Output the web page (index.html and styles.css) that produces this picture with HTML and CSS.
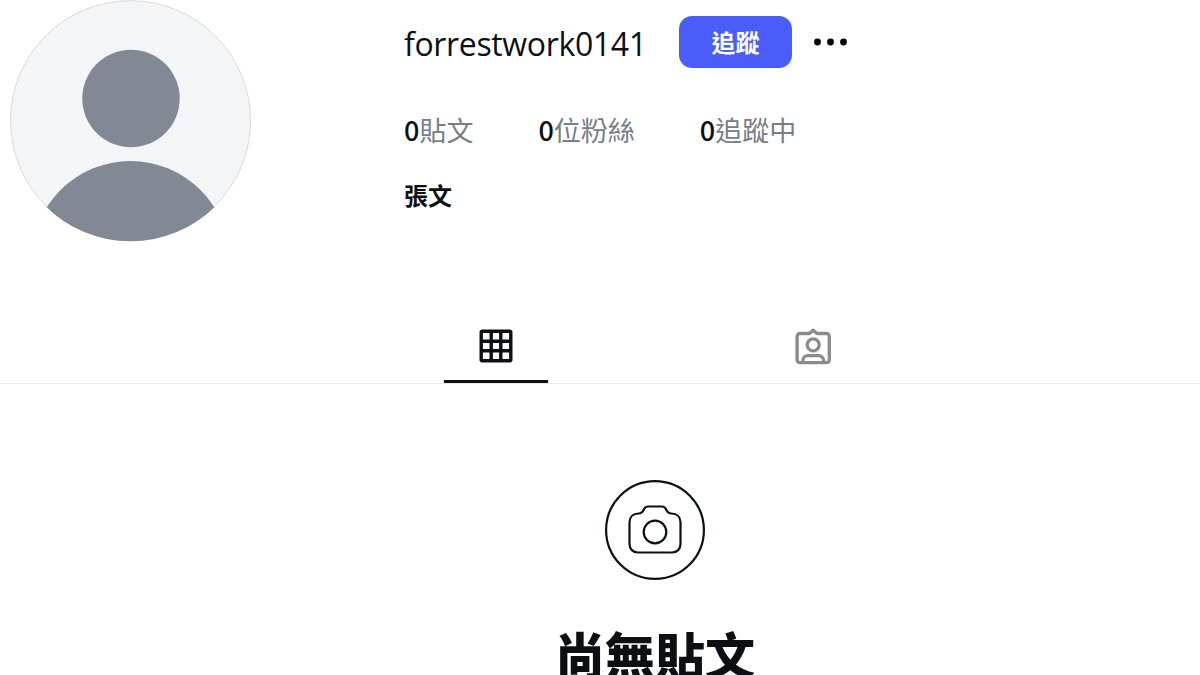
FILE: index.html
```
<!DOCTYPE html>
<html lang="zh-Hant">
<head>
    <meta charset="UTF-8">
    <title>forrestwork0141</title>
    <link rel="stylesheet" href="styles.css">
</head>
<body>
    <header class="profile">
        <svg class="avatar" viewBox="0 0 242 242">
            <defs>
                <clipPath id="avatar-clip"><circle cx="120.5" cy="120.7" r="120.5"/></clipPath>
            </defs>
            <circle cx="120.5" cy="120.7" r="120" fill="#f3f5f7" stroke="#d9dadc"/>
            <g clip-path="url(#avatar-clip)" fill="#828995">
                <circle cx="121" cy="98.5" r="48.7"/>
                <circle cx="120.5" cy="260" r="99"/>
            </g>
        </svg>

        <div class="info">
            <div class="title-row">
                <h1 class="username">forrestwork0141</h1>
                <button class="follow">追蹤</button>
                <svg class="more" width="34" height="8" viewBox="0 0 34 8">
                    <circle cx="3.5" cy="4" r="3.4"/>
                    <circle cx="16.5" cy="4" r="3.4"/>
                    <circle cx="29.5" cy="4" r="3.4"/>
                </svg>
            </div>
            <ul class="stats">
                <li><b>0</b>貼文</li>
                <li><b>0</b>位粉絲</li>
                <li><b>0</b>追蹤中</li>
            </ul>
            <div class="name">張文</div>
        </div>
    </header>

    <nav class="tabs">
        <a class="tab active">
            <svg width="34" height="34" viewBox="0 0 34 34" fill="none" stroke="#0c1014" stroke-width="3.4">
                <rect x="2.2" y="2.2" width="29.6" height="29.6" rx="1"/>
                <path d="M12.2 2v30M21.8 2v30M2 12.2h30M2 21.8h30"/>
            </svg>
        </a>
        <a class="tab">
            <svg width="36" height="37" viewBox="0 0 36 37" fill="none" stroke="#8b8b8b" stroke-width="3.3" stroke-linecap="round" stroke-linejoin="round">
                <path d="M14.5 5.5 18.2 2.2l3.7 3.3h9.6a2.8 2.8 0 0 1 2.8 2.8v23.6a2.8 2.8 0 0 1-2.8 2.8H4.900a2.8 2.8 0 0 1-2.800-2.800V8.300a2.8 2.8 0 0 1 2.800-2.800z"/>
                <circle cx="18.2" cy="16.8" r="6"/>
                <path d="M7.800 34v-1.300a5 5 0 0 1 5-5h10.800a5 5 0 0 1 5 5V34"/>
            </svg>
        </a>
    </nav>

    <main class="empty">
        <svg width="100" height="100" viewBox="0 0 100 100" fill="none" stroke="#0c1014" stroke-width="2.2">
            <circle cx="50" cy="50" r="48.9"/>
            <path d="M33.5 33.5c2.6 0 4.3-1.3 5.3-3.8.8-2.1 2-3.2 4.2-3.2h14c2.2 0 3.4 1.1 4.2 3.2 1 2.5 2.7 3.8 5.3 3.8 5.5 0 9 3.5 9 9v21.500c0 5-3.500 8.500-8.500 8.500H33c-5 0-8.500-3.500-8.500-8.500V42.500c0-5.500 3.500-9 9-9z"/>
            <circle cx="50" cy="52" r="11.3"/>
        </svg>
        <h2>尚無貼文</h2>
    </main>
</body>
</html>
```

FILE: styles.css
```
* { box-sizing: border-box; margin: 0; padding: 0; }
body { width: 1200px; height: 675px; overflow: hidden; background: #fff; color: #0c1014; font-family: "Open Sans", "Noto Sans CJK TC", sans-serif; }

.profile { display: flex; height: 322px; padding-left: 10px; }
.avatar { width: 242px; height: 242px; margin-right: 152px; }
.info { padding-top: 16px; }

.title-row { display: flex; align-items: center; height: 52px; }
.username { width: 275px; padding-top: 4px; font-size: 32px; font-weight: 400; line-height: 44px; letter-spacing: -0.35px; white-space: nowrap; }
.follow { width: 113px; height: 52px; padding-bottom: 1px; border: none; border-radius: 13px; background: #4a5df9; color: #fff; font: 700 24px/34px "Noto Sans CJK TC", sans-serif; }
.more { margin-left: 22px; }

.stats { display: flex; gap: 65px; margin-top: 42px; list-style: none; font: 400 27px/40px "Noto Sans CJK TC", sans-serif; color: #777d89; }
.stats b { font-weight: 500; color: #0c1014; }
.name { margin-top: 27px; font: 700 24px/36px "Noto Sans CJK TC", sans-serif; }

.tabs { display: flex; gap: 213px; height: 62px; padding-left: 444px; border-bottom: 1px solid #e9eaec; }
.tab { display: flex; justify-content: center; width: 104px; height: 61px; padding-top: 6px; }
.tab.active { padding-top: 7px; border-bottom: 3px solid #0c1014; }

.empty { display: flex; flex-direction: column; align-items: center; padding: 96px 0 0 110px; }
.empty h2 { margin-top: 37px; font: 900 50px/72px "Noto Sans CJK TC", sans-serif; white-space: nowrap; }
```
